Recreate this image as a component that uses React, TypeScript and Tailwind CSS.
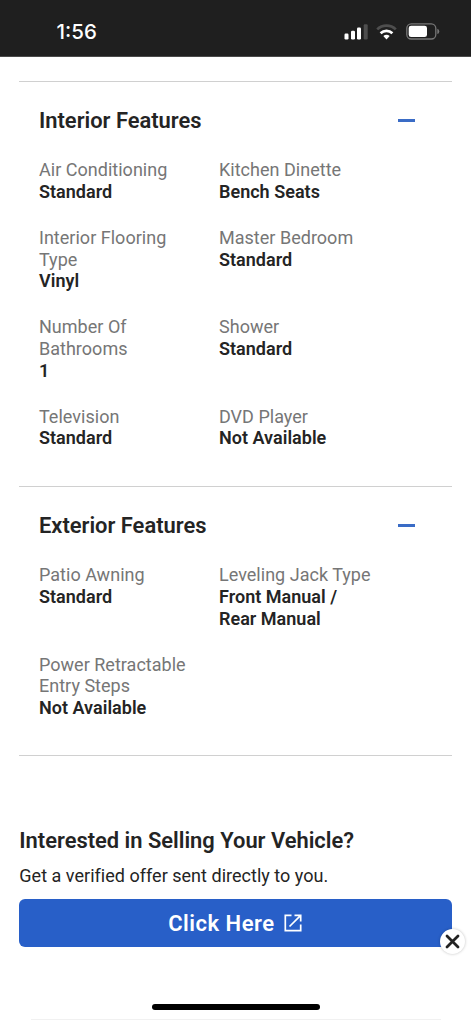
import { useState } from "react";

type Feature = {
  label: string;
  value: string;
};

const interiorFeatures: Feature[] = [
  { label: "Air Conditioning", value: "Standard" },
  { label: "Kitchen Dinette", value: "Bench Seats" },
  { label: "Interior Flooring Type", value: "Vinyl" },
  { label: "Master Bedroom", value: "Standard" },
  { label: "Number Of Bathrooms", value: "1" },
  { label: "Shower", value: "Standard" },
  { label: "Television", value: "Standard" },
  { label: "DVD Player", value: "Not Available" },
];

const exteriorFeatures: Feature[] = [
  { label: "Patio Awning", value: "Standard" },
  { label: "Leveling Jack Type", value: "Front Manual / Rear Manual" },
  { label: "Power Retractable Entry Steps", value: "Not Available" },
];

const StatusBar = () => (
  <header className="flex h-[57px] shrink-0 items-center justify-between border-b border-[#4a4a4a] bg-[#1f1f1f] pt-[7px] pr-[31px] pl-[56.5px] text-white">
    <span className="font-['Inter',sans-serif] text-[20.5px] leading-6 font-medium">1:56</span>
    <div className="flex items-center">
      {/* Signal */}
      <svg width="25" height="16" viewBox="0 0 25 16" fill="currentColor">
        <rect x="0.5" y="9.5" width="4" height="6" rx="1.2" />
        <rect x="7" y="6.7" width="4" height="8.8" rx="1.2" />
        <rect x="13" y="3.5" width="4" height="12" rx="1.2" />
        <rect x="19.7" y="0.3" width="4" height="15.2" rx="1.2" fill="#4e4e4e" />
      </svg>
      {/* Wifi */}
      <svg className="ml-[7px]" width="21" height="16" viewBox="0 0 21 16" fill="none" strokeWidth="2.7">
        <path d="M1.2 5.4C6.3 0.4 14.7 0.4 19.8 5.4" stroke="#4e4e4e" />
        <path d="M4.6 9.2C7.9 6 13.1 6 16.4 9.2" stroke="currentColor" />
        <path d="M7.3 12.1Q10.5 9.3 13.7 12.1L10.5 15.4Z" fill="currentColor" />
      </svg>
      {/* Battery */}
      <svg className="ml-[9px]" width="34" height="17" viewBox="0 0 34 17" fill="none">
        <rect x="0.8" y="0.8" width="29" height="15.2" rx="4.5" stroke="#777" strokeWidth="1.3" />
        <rect x="2.7" y="2.7" width="18.3" height="11.4" rx="2.4" fill="currentColor" />
        <path d="M31.3 5.8Q33.3 6.4 33.3 8.4Q33.3 10.4 31.3 11Z" fill="#777" />
      </svg>
    </div>
  </header>
);

const FeatureSection = ({ title, features }: { title: string; features: Feature[] }) => {
  const [isOpen, setIsOpen] = useState(true);

  return (
    <section className="border-t border-[#d0d0d0] pt-[26px] pr-[19px] pb-[36.6px] pl-[19.7px]">
      <button
        type="button"
        className="flex w-full items-center justify-between pr-[18px]"
        onClick={() => setIsOpen(!isOpen)}
      >
        <h2 className="text-[21.9px] leading-[26px] font-semibold">{title}</h2>
        <span className="h-[3px] w-[17px] bg-[#3a6cc6]" />
      </button>
      {isOpen && (
        <dl className="mt-[25.6px] grid grid-cols-[180px_180px] gap-y-[24.3px] text-[18px] leading-[21.7px] tracking-[0.02px]">
          {features.map((feature) => (
            <div key={feature.label} className="pr-6">
              <dt className="text-[#767676]">{feature.label}</dt>
              <dd className="font-semibold">{feature.value}</dd>
            </div>
          ))}
        </dl>
      )}
    </section>
  );
};

const SellBanner = () => (
  <section className="mt-[72px]">
    <h2 className="text-[21.9px] leading-[26px] font-semibold">Interested in Selling Your Vehicle?</h2>
    <p className="mt-[10.6px] text-[18px] leading-[22px] tracking-[0.02px]">Get a verified offer sent directly to you.</p>
    <div className="relative mt-[11.5px]">
      <a
        href="#"
        className="flex h-[48.5px] items-center justify-center gap-2 rounded-md bg-[#285fc8] pt-px text-[22px] font-semibold tracking-[0.5px] text-white"
      >
        Click Here
        <svg width="20" height="20" viewBox="0 0 20 20" fill="none" stroke="currentColor" strokeWidth="1.7">
          <path d="M8.5 2.3H2.3v15.4h15.4v-6.2M11.5 2.3h6.2v6.2M17.7 2.3 6.5 13.5" />
        </svg>
      </a>
      <button
        type="button"
        aria-label="Close"
        className="absolute -right-[13px] -bottom-[6.5px] flex size-[25px] items-center justify-center rounded-full bg-white shadow-[0_0_3px_rgba(0,0,0,0.25)]"
      >
        <svg width="15" height="15" viewBox="0 0 15 15" stroke="#222" strokeWidth="2.8" strokeLinecap="round">
          <path d="M2 2 13 13M13 2 2 13" />
        </svg>
      </button>
    </div>
  </section>
);

const App = () => {
  return (
    <div className="flex h-[1020px] w-[471px] flex-col overflow-hidden bg-white font-['Roboto',sans-serif] text-[#242424]">
      <StatusBar />
      <main className="flex-1 pt-[23.6px] pr-[19.5px] pl-[19.3px]">
        <FeatureSection title="Interior Features" features={interiorFeatures} />
        <FeatureSection title="Exterior Features" features={exteriorFeatures} />
        <div className="border-t border-[#d0d0d0]" />
        <SellBanner />
      </main>
      <footer className="flex h-4 shrink-0 flex-col items-center justify-between">
        <div className="h-1.5 w-[168px] rounded-full bg-black" />
        <div className="h-px w-[410px] bg-[#f1f1f1]" />
      </footer>
    </div>
  );
};

export default App;
